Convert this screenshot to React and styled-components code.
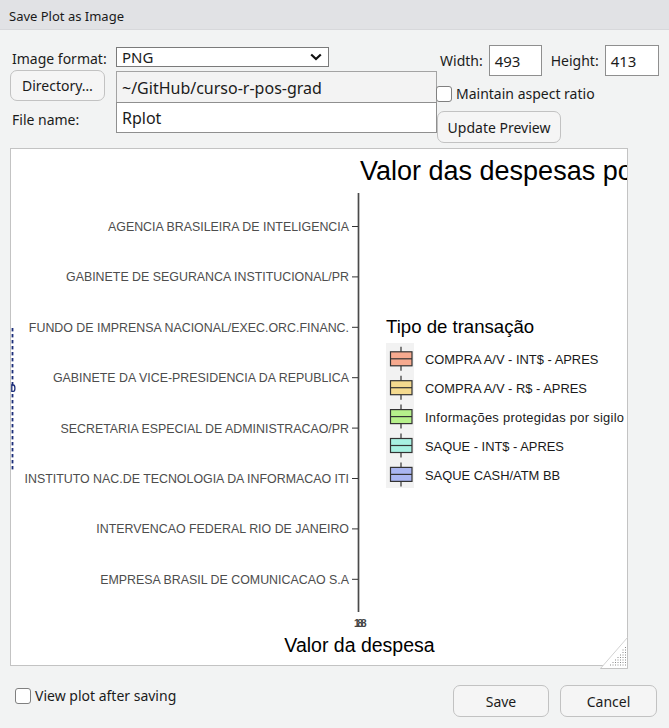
import React from "react";
import styled, { createGlobalStyle } from "styled-components";

const Global = createGlobalStyle`
  html, body { margin: 0; padding: 0; background: #f2f3f3; }
  body { font-family: "Noto Sans", "Open Sans", sans-serif; color: #1b1b1b; }
  * { box-sizing: border-box; }
`;

const Dialog = styled.div`
  width: 669px;
  height: 728px;
  display: flex;
  flex-direction: column;
  background: #f2f3f3;
  overflow: hidden;
`;

const TitleBar = styled.div`
  height: 30px;
  flex: none;
  display: flex;
  align-items: center;
  padding: 2px 0 0 9px;
  font-size: 13px;
  color: #1a1a1a;
  background: #e1e2e5;
  border-bottom: 1px solid #d7d8db;
`;

const Body = styled.div`
  display: flex;
  flex-direction: column;
  padding: 15px 12px 0 10px;
`;

const TopRow = styled.div`
  display: flex;
  align-items: flex-start;
`;

const FormGrid = styled.div`
  width: 427px;
  margin-top: 2px;
  display: grid;
  grid-template-columns: 106px 321px;
  grid-template-rows: 20px 35px 31px;
`;

const Label = styled.div`
  font-size: 14px;
  padding: ${(p) => p.$pt || 0}px 0 0 2px;
  display: flex;
  align-items: center;
  white-space: nowrap;
`;

const SelectBox = styled.div`
  height: 20px;
  display: flex;
  align-items: center;
  justify-content: space-between;
  padding: 0 6px 0 5px;
  font-size: 15px;
  background: #fff;
  border: 1px solid #7a7a7a;
  width: 213px;
`;

const Chevron = styled.svg`
  width: 12px;
  height: 8px;
  display: block;
`;

const Button = styled.button`
  font: inherit;
  font-size: 14px;
  color: #1b1b1b;
  background: #f5f5f5;
  border: 1px solid #c2c2c2;
  border-radius: 7px;
  width: ${(p) => p.$w}px;
  height: ${(p) => p.$h || 32}px;
  padding: 0;
  display: flex;
  align-items: center;
  justify-content: center;
  margin: ${(p) => p.$m || 0};
`;

const PathField = styled.div`
  margin-top: 4px;
  height: 31px;
  display: flex;
  align-items: center;
  padding: 1px 0 0 5px;
  font-size: 16px;
  background: #f3f3f3;
  border: 1px solid #a3a3a3;
  border-bottom: none;
`;

const TextField = styled.div`
  height: ${(p) => p.$h || 31}px;
  width: ${(p) => p.$w || "auto"};
  display: flex;
  align-items: center;
  padding: 1px 0 0 5px;
  font-size: ${(p) => p.$fs || 16}px;
  background: #fff;
  border: 1px solid #8f8f8f;
`;

const RightCol = styled.div`
  margin-left: -1px;
  display: flex;
  flex-direction: column;
  align-items: flex-start;
`;

const SizeRow = styled.div`
  display: flex;
  align-items: center;
  padding-left: 4px;
`;

const SizeLabel = styled.span`
  font-size: 14px;
  margin: 0 6px 0 ${(p) => p.$ml || 0}px;
`;

const CheckRow = styled.label`
  display: flex;
  align-items: center;
  gap: 4px;
  height: 16px;
  line-height: 16px;
  font-size: 14px;
  margin-top: ${(p) => p.$mt || 0}px;
`;

const Box = styled.span`
  width: 16px;
  height: 16px;
  background: #fff;
  border: 1px solid #808080;
  border-radius: 3px;
  flex: none;
`;

const PlotFrame = styled.div`
  position: relative;
  margin-top: 5px;
  width: 618px;
  height: 518px;
  background: #fff;
  border: 1px solid #c3c3c3;
`;

const PlotSvg = styled.svg`
  display: block;
  width: 616px;
  height: 516px;
  font-family: "Liberation Sans", Arial, sans-serif;
`;

const Grip = styled.svg`
  position: absolute;
  right: -1px;
  bottom: -4px;
  width: 28px;
  height: 32px;
`;

const BottomRow = styled.div`
  display: flex;
  align-items: flex-start;
  margin-top: 19px;
  padding-left: 5px;
`;

const Spacer = styled.div`
  flex: 1;
`;

const ticks = [
  "AGENCIA BRASILEIRA DE INTELIGENCIA",
  "GABINETE DE SEGURANCA INSTITUCIONAL/PR",
  "FUNDO DE IMPRENSA NACIONAL/EXEC.ORC.FINANC.",
  "GABINETE DA VICE-PRESIDENCIA DA REPUBLICA",
  "SECRETARIA ESPECIAL DE ADMINISTRACAO/PR",
  "INSTITUTO NAC.DE TECNOLOGIA DA INFORMACAO ITI",
  "INTERVENCAO FEDERAL RIO DE JANEIRO",
  "EMPRESA BRASIL DE COMUNICACAO S.A",
];

const legend = [
  { label: "COMPRA A/V - INT$ - APRES", color: "#F7AA8F" },
  { label: "COMPRA A/V - R$ - APRES", color: "#F4DA8F" },
  { label: "Informações protegidas por sigilo", color: "#B6F08B", len: 199 },
  { label: "SAQUE - INT$ - APRES", color: "#A8F1E2" },
  { label: "SAQUE CASH/ATM BB", color: "#AAB6F1" },
];

function Plot() {
  const dashes = [];
  for (let y = 179; y < 321; y += 6) {
    if (y > 234 && y < 244) continue;
    dashes.push(<rect key={y} x="0.6" y={y} width="1.8" height="3.4" fill="#1a2c78" />);
  }
  return (
    <PlotSvg viewBox="0 0 616 516">
      {dashes}
      <path d="M0.8 236 h1.5 q1.6 0 1.6 3.2 q0 3.2 -1.6 3.2 h-1.5 z" fill="none" stroke="#1a2c78" strokeWidth="1.3" />
      <text x="349" y="30.5" fontSize="27" fill="#000">Valor das despesas po</text>
      <line x1="347.5" y1="44" x2="347.5" y2="463" stroke="#4a4a4a" strokeWidth="1.7" />
      {ticks.map((t, i) => {
        const y = 77.5 + i * 50.4;
        return (
          <g key={t}>
            <line x1="341" y1={y} x2="347" y2={y} stroke="#333" strokeWidth="1" />
            <text x="338" y={y + 4.5} fontSize="12.4" fill="#4d4d4d" textAnchor="end">
              {t}
            </text>
          </g>
        );
      })}
      <text x="348" y="478" fontSize="10.5" fontWeight="bold" fill="#444" textAnchor="middle" letterSpacing="-2.5">
        188
      </text>
      <text x="348.5" y="503" fontSize="19.5" fill="#000" textAnchor="middle">
        Valor da despesa
      </text>
      <text x="375" y="184" fontSize="18.6" fill="#000">
        Tipo de transação
      </text>
      <rect x="375" y="194" width="28" height="145" fill="#f2f2f2" />
      {legend.map((l, i) => {
        const c = 209.8 + i * 28.9;
        return (
          <g key={l.label}>
            <line x1="390" y1={c - 12} x2="390" y2={c + 12} stroke="#333" strokeWidth="1.2" />
            <rect x="379.5" y={c - 7} width="21.5" height="14" fill={l.color} stroke="#333" strokeWidth="1.2" />
            <line x1="379.5" y1={c} x2="401" y2={c} stroke="#333" strokeWidth="1.2" />
            <text x="414" y={c + 5.5} fontSize="12.9" fill="#1a1a1a" textLength={l.len} lengthAdjust={l.len ? "spacing" : undefined}>
              {l.label}
            </text>
          </g>
        );
      })}
    </PlotSvg>
  );
}

function GripIcon() {
  const dots = [];
  for (let x = 10; x <= 26; x += 2.5) {
    for (let y = 10; y <= 29; y += 2.5) {
      if (y >= 32 - (x / 28) * 32 + 6) {
        dots.push(<rect key={`${x}-${y}`} x={x} y={y} width="1" height="1" fill="#8a8a8a" />);
      }
    }
  }
  return (
    <Grip viewBox="0 0 28 32">
      <path d="M27.5 0.5 L27.5 31.5 L0.5 31.5 Z" fill="#fff" stroke="#d2d2d2" strokeWidth="1" />
      <path d="M27.5 0.5 L27.5 31.5 L0.5 31.5" fill="none" stroke="#c4c4c4" strokeWidth="1" />
      {dots}
    </Grip>
  );
}

export default function App() {
  return (
    <>
      <Global />
      <Dialog>
        <TitleBar>Save Plot as Image</TitleBar>
        <Body>
          <TopRow>
            <FormGrid>
              <Label $pt={2}>Image format:</Label>
              <SelectBox>
                <span>PNG</span>
                <Chevron viewBox="0 0 12 8">
                  <polyline points="1.2,1.5 6,6 10.8,1.5" fill="none" stroke="#111" strokeWidth="2.2" />
                </Chevron>
              </SelectBox>
              <Button $w={95} $h={31} $m="3px 0 0 0">Directory…</Button>
              <PathField>~/GitHub/curso-r-pos-grad</PathField>
              <Label $pt={3}>File name:</Label>
              <TextField>Rplot</TextField>
            </FormGrid>
            <RightCol>
              <SizeRow>
                <SizeLabel>Width:</SizeLabel>
                <TextField $w="53px" $fs={15}>493</TextField>
                <SizeLabel $ml={9}>Height:</SizeLabel>
                <TextField $w="54px" $fs={15}>413</TextField>
              </SizeRow>
              <CheckRow $mt={10}>
                <Box />
                Maintain aspect ratio
              </CheckRow>
              <Button $w={124} $h={32} $m="9px 0 0 1px">Update Preview</Button>
            </RightCol>
          </TopRow>
          <PlotFrame>
            <Plot />
            <GripIcon />
          </PlotFrame>
          <BottomRow>
            <CheckRow $mt={3}>
              <Box />
              View plot after saving
            </CheckRow>
            <Spacer />
            <Button $w={96} $h={32}>Save</Button>
            <Button $w={97} $h={32} $m="0 0 0 11px">Cancel</Button>
          </BottomRow>
        </Body>
      </Dialog>
    </>
  );
}
